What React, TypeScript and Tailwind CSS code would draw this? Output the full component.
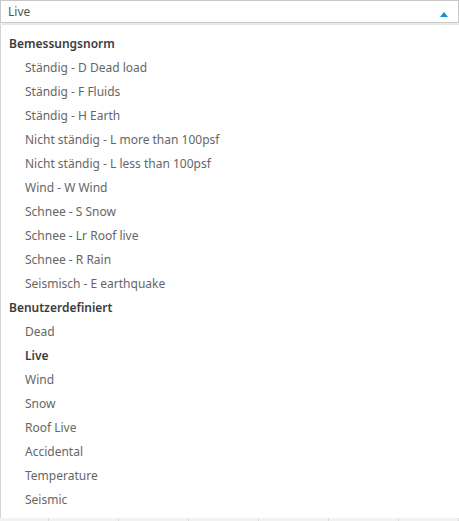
import { ChevronUp } from 'lucide-react';

const norm = [
  'Ständig - D Dead load',
  'Ständig - F Fluids',
  'Ständig - H Earth',
  'Nicht ständig - L more than 100psf',
  'Nicht ständig - L less than 100psf',
  'Wind - W Wind',
  'Schnee - S Snow',
  'Schnee - Lr Roof live',
  'Schnee - R Rain',
  'Seismisch - E earthquake',
];

const custom = ['Dead', 'Live', 'Wind', 'Snow', 'Roof Live', 'Accidental', 'Temperature', 'Seismic'];

function Group({ title, items, selected }: { title: string; items: string[]; selected?: string }) {
  return (
    <div>
      <div className="h-6 flex items-center pl-[8px] text-[12px] font-semibold text-[#3c3c3c]">{title}</div>
      {items.map(item => (
        <div
          key={item}
          className={`h-6 flex items-center pl-[24px] text-[12px] ${item === selected ? 'font-semibold text-[#3c3c3c]' : 'text-[#666]'}`}
        >
          {item}
        </div>
      ))}
    </div>
  );
}

export default function App() {
  return (
    <div className="w-[459px] h-[521px] bg-white overflow-hidden flex flex-col" style={{ fontFamily: '"Noto Sans", "Open Sans", sans-serif' }}>
      <div className="h-[23px] shrink-0 border border-[#c8c8c8] flex items-center justify-between pl-[7px] pr-[10px]">
        <span className="text-[12px] text-[#555]">Live</span>
        <svg width="8" height="5" viewBox="0 0 8 5" className="mt-[5px]">
          <polygon points="4,0 8,5 0,5" fill="#0696d7" />
        </svg>
      </div>
      <div className="h-[2px] shrink-0 bg-[#ececec]" />
      <div className="flex-1 border-l border-[#d4d4d4] pt-[7px] shadow-[0_1px_3px_rgba(0,0,0,0.15)]">
        <Group title="Bemessungsnorm" items={norm} />
        <Group title="Benutzerdefiniert" items={custom} selected="Live" />
      </div>
      <div className="h-[3px] shrink-0 bg-[#f2f2f2] grid grid-cols-[49px_70px_70px_70px_70px_70px_1fr]">
        {Array.from({ length: 7 }).map((_, i) => (
          <div key={i} className="border-r border-[#ddd]" />
        ))}
      </div>
    </div>
  );
}
